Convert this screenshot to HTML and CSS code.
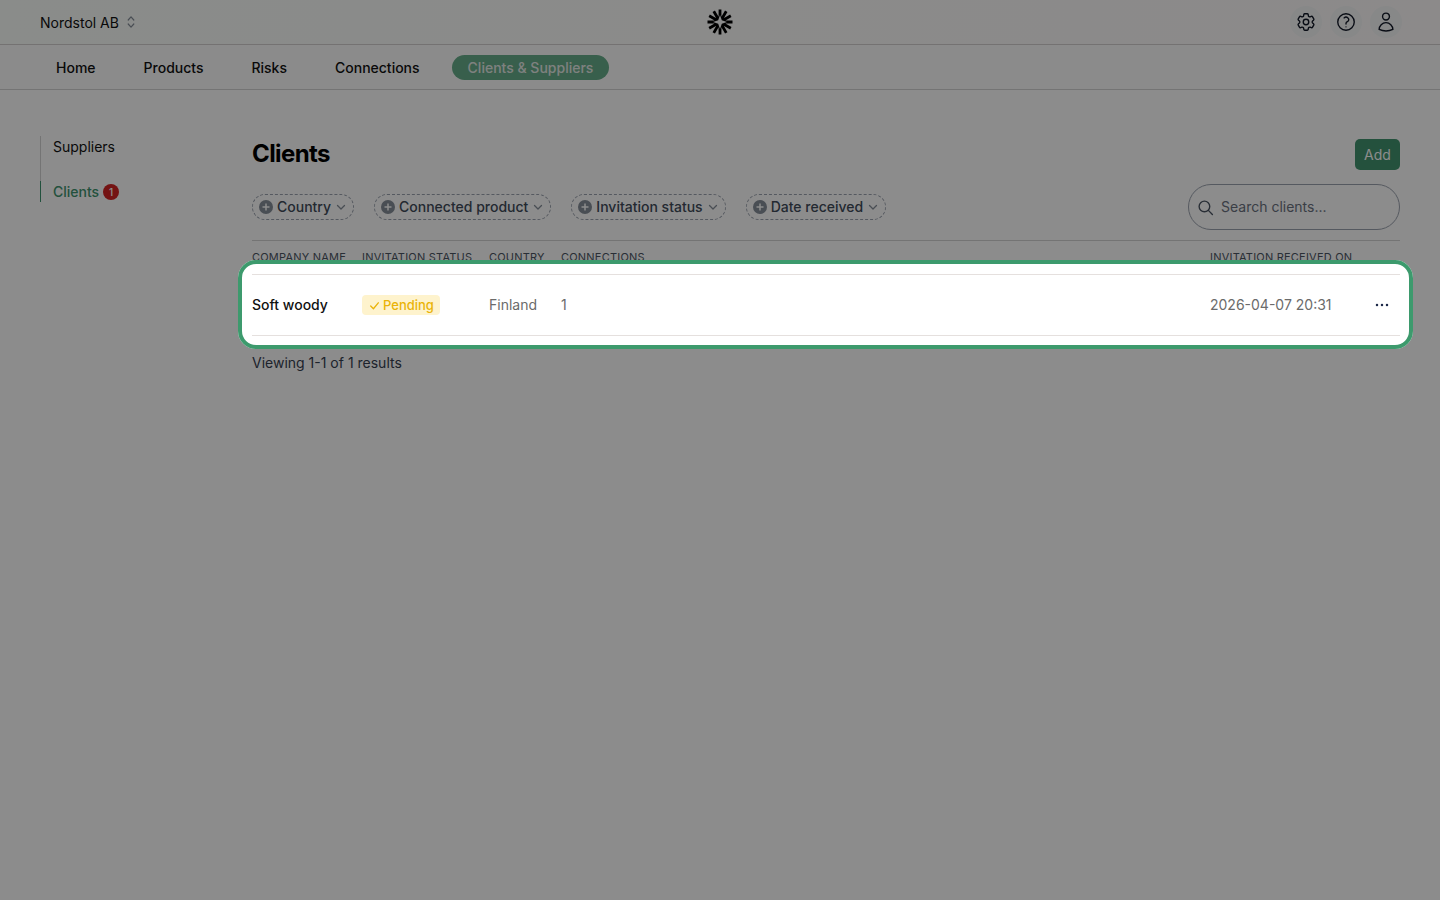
FILE: index.html
```html
<!DOCTYPE html>
<html lang="en">
<head>
<meta charset="utf-8">
<title>Clients</title>
<link rel="stylesheet" href="styles.css">
</head>
<body>
<header class="topbar">
  <div class="org"><span>Nordstol AB</span>
    <svg class="org-icon" viewBox="0 0 20 20" fill="none" stroke="currentColor" stroke-width="1.5" stroke-linecap="round" stroke-linejoin="round"><path d="M6.5 7.500 10 3.500l3.500 4M6.500 12.500l3.500 4 3.500-4"/></svg>
  </div>
  <svg class="logo" viewBox="0 0 26 26"><path class="logo-rays" d="M13 13 13 .5M13 13 19.250 2.180M13 13 23.830 6.750M13 13H25.500M13 13 23.830 19.250M13 13 19.250 23.830M13 13V25.500M13 13 6.750 23.830M13 13 2.180 19.250M13 13H.5M13 13 2.180 6.750M13 13 6.750 2.180"/><path class="logo-hole" d="M13 6 14.800 11.200 20 13 14.800 14.800 13 20 11.200 14.800 6 13 11.200 11.200Z"/></svg>
  <div class="top-actions">
    <span class="icon-btn"><svg viewBox="0 0 24 24" fill="none" stroke="currentColor" stroke-width="1.500" stroke-linecap="round" stroke-linejoin="round"><path d="M9.594 3.940c.09-.542.56-.94 1.110-.94h2.593c.55 0 1.020.398 1.110.94l.213 1.281c.063.374.313.686.645.870.074.04.147.083.22.127.325.196.72.257 1.075.124l1.217-.456a1.125 1.125 0 0 1 1.370.49l1.296 2.247a1.125 1.125 0 0 1-.26 1.431l-1.003.827c-.293.241-.438.613-.43.992a7.723 7.723 0 0 1 0 .255c-.008.378.137.75.43.991l1.004.827c.424.35.534.955.26 1.430l-1.298 2.247a1.125 1.125 0 0 1-1.369.491l-1.217-.456c-.355-.133-.75-.072-1.076.124a6.470 6.470 0 0 1-.22.128c-.331.183-.581.495-.644.869l-.213 1.281c-.09.543-.56.94-1.110.94h-2.594c-.55 0-1.019-.398-1.110-.94l-.213-1.281c-.062-.374-.312-.686-.644-.87a6.520 6.520 0 0 1-.22-.127c-.325-.196-.72-.257-1.076-.124l-1.217.456a1.125 1.125 0 0 1-1.369-.49l-1.297-2.247a1.125 1.125 0 0 1 .26-1.431l1.004-.827c.292-.24.437-.613.43-.991a6.932 6.932 0 0 1 0-.255c.007-.38-.138-.751-.43-.992l-1.004-.827a1.125 1.125 0 0 1-.26-1.430l1.297-2.247a1.125 1.125 0 0 1 1.370-.491l1.216.456c.356.133.751.072 1.076-.124.072-.044.146-.086.22-.128.332-.183.582-.495.644-.869l.214-1.280Z"/><path d="M15 12a3 3 0 1 1-6 0 3 3 0 0 1 6 0Z"/></svg></span>
    <span class="icon-btn"><svg viewBox="0 0 24 24" fill="none" stroke="currentColor" stroke-width="1.500" stroke-linecap="round" stroke-linejoin="round"><path d="M9.879 7.519c1.171-1.025 3.071-1.025 4.242 0 1.172 1.025 1.172 2.687 0 3.712-.203.179-.43.326-.67.442-.745.361-1.450.999-1.450 1.827v.75M21 12a9 9 0 1 1-18 0 9 9 0 0 1 18 0Zm-9 5.250h.008v.008H12v-.008Z"/></svg></span>
    <span class="icon-btn"><svg viewBox="0 0 24 24" fill="none" stroke="currentColor" stroke-width="1.500" stroke-linecap="round" stroke-linejoin="round"><path d="M15.750 6a3.750 3.750 0 1 1-7.500 0 3.750 3.750 0 0 1 7.500 0ZM4.501 20.118a7.500 7.500 0 0 1 14.998 0A17.933 17.933 0 0 1 12 21.750c-2.676 0-5.216-.584-7.499-1.632Z"/></svg></span>
  </div>
</header>
<nav class="mainnav">
  <a class="nav-item">Home</a>
  <a class="nav-item">Products</a>
  <a class="nav-item">Risks</a>
  <a class="nav-item">Connections</a>
  <a class="nav-item active">Clients &amp; Suppliers</a>
</nav>
<div class="layout">
  <aside class="side">
    <a class="side-item">Suppliers</a>
    <a class="side-item current">Clients <span class="badge">1</span></a>
  </aside>
  <main class="content">
    <div class="title-row">
      <h1>Clients</h1>
      <button class="add">Add</button>
    </div>
    <div class="filter-row">
      <div class="filters">
        <span class="chip"><svg class="plus" viewBox="0 0 14 14"><circle cx="7" cy="7" r="7"/><path d="M7 3.500v7M3.500 7h7"/></svg>Country<svg class="chev" viewBox="0 0 12 12"><path d="M2.500 4.500 6 8l3.500-3.500"/></svg></span>
        <span class="chip"><svg class="plus" viewBox="0 0 14 14"><circle cx="7" cy="7" r="7"/><path d="M7 3.500v7M3.500 7h7"/></svg>Connected product<svg class="chev" viewBox="0 0 12 12"><path d="M2.500 4.500 6 8l3.500-3.500"/></svg></span>
        <span class="chip"><svg class="plus" viewBox="0 0 14 14"><circle cx="7" cy="7" r="7"/><path d="M7 3.500v7M3.500 7h7"/></svg>Invitation status<svg class="chev" viewBox="0 0 12 12"><path d="M2.500 4.500 6 8l3.500-3.500"/></svg></span>
        <span class="chip"><svg class="plus" viewBox="0 0 14 14"><circle cx="7" cy="7" r="7"/><path d="M7 3.500v7M3.500 7h7"/></svg>Date received<svg class="chev" viewBox="0 0 12 12"><path d="M2.500 4.500 6 8l3.500-3.500"/></svg></span>
      </div>
      <div class="search">
        <svg viewBox="0 0 16 16" fill="none" stroke="currentColor" stroke-width="1.300" stroke-linecap="round"><circle cx="7" cy="7" r="5"/><path d="m10.700 10.700 3.800 3.800"/></svg>
        <span>Search clients...</span>
      </div>
    </div>
    <table class="table">
      <thead>
        <tr>
          <th class="c1">Company name</th>
          <th class="c2">Invitation status</th>
          <th class="c3">Country</th>
          <th class="c4">Connections</th>
          <th class="c5">Invitation received on</th>
          <th class="c6"></th>
        </tr>
      </thead>
      <tbody>
        <tr>
          <td class="name">Soft woody</td>
          <td><span class="status"><svg viewBox="0 0 12 12"><path d="M2.500 6.500 5 9l4.500-5.500"/></svg>Pending</span></td>
          <td class="muted">Finland</td>
          <td class="muted">1</td>
          <td class="muted">2026-04-07 20:31</td>
          <td class="dots-cell"><svg class="dots" viewBox="0 0 14 4"><circle cx="2" cy="2" r="1.250"/><circle cx="7" cy="2" r="1.250"/><circle cx="12" cy="2" r="1.250"/></svg></td>
        </tr>
      </tbody>
    </table>
    <p class="results">Viewing 1-1 of 1 results</p>
  </main>
</div>
<div class="spotlight"></div>
</body>
</html>
```
FILE: styles.css
```css
* { box-sizing: border-box; }
html, body { height: 100%; }
body {
  margin: 0;
  background: #fff;
  color: #000;
  font-family: Inter, "Liberation Sans", sans-serif;
  font-size: 14px;
  line-height: 20px;
  overflow: hidden;
}
.topbar {
  position: relative;
  height: 45px;
  display: flex;
  align-items: center;
  justify-content: space-between;
  padding: 0 40px;
  border-bottom: 1px solid #d4d0d0;
  background: linear-gradient(90deg, #fbfffc, #fffbfc);
}
.org { display: flex; align-items: center; gap: 4px; color: #111; }
.org span { padding-top: 2px; }
.org-icon { width: 16px; height: 16px; color: #868e99; }
.logo { position: absolute; left: 707px; top: 9px; width: 26px; height: 26px; }
.logo-rays { stroke: #000; stroke-width: 2.800; fill: none; }
.logo-hole { fill: #fff; }
.top-actions { display: flex; gap: 8px; margin-right: -2px; }
.icon-btn {
  width: 32px;
  height: 32px;
  border-radius: 50%;
  background: #f6f7f7;
  color: #111827;
  display: flex;
  align-items: center;
  justify-content: center;
}
.icon-btn svg { width: 22px; height: 22px; }
.mainnav {
  height: 45px;
  display: flex;
  align-items: center;
  gap: 16px;
  padding: 0 40px;
  border-bottom: 1px solid #d4d4d4;
  background: #fdfdfd;
}
.nav-item { padding: 0 16px; height: 25px; line-height: 25px; border-radius: 13px; color: #111; font-weight: 450; }
.nav-item.active { background: #67ad8a; color: #e6ebe8; font-weight: 500; }
.layout { display: flex; padding: 46px 40px 0; }
.side { width: 212px; flex: none; display: flex; flex-direction: column; gap: 24px; }
.side-item {
  height: 21px;
  padding-left: 12px;
  border-left: 1px solid #d4d4d4;
  display: flex;
  align-items: center;
  gap: 4px;
  color: #111;
  position: relative;
}
.side-item::after { content: ""; position: absolute; left: -1px; top: 21px; height: 24px; width: 1px; background: #d4d4d4; }
.side-item.current { color: #3f9470; border-left-color: #3f9470; font-weight: 500; }
.side-item.current::after { display: none; }
.badge {
  width: 16px;
  height: 16px;
  border-radius: 50%;
  background: #d32323;
  color: #fff;
  font-size: 10px;
  line-height: 16px;
  text-align: center;
}
.content { flex: 1; min-width: 0; }
.title-row { display: flex; justify-content: space-between; align-items: center; height: 31px; margin-top: 3px; }
h1 { margin: 0 0 2px; font-size: 24px; line-height: 30px; font-weight: 700; letter-spacing: -0.6px; }
.add {
  width: 45px;
  height: 31px;
  border: 0;
  border-radius: 5px;
  background: #42946f;
  color: #fff;
  font: 14px/20px Inter, sans-serif;
  padding: 0;
}
.filter-row { display: flex; justify-content: space-between; align-items: center; margin-top: 14px; height: 46px; }
.filters { display: flex; gap: 20px; }
.chip {
  height: 26px;
  padding: 0 6px;
  display: flex;
  align-items: center;
  gap: 4px;
  border: 1px dashed #9ca3af;
  border-radius: 13px;
  color: #414b5a;
  font-weight: 500;
  white-space: nowrap;
}
.plus { width: 14px; height: 14px; flex: none; }
.plus circle { fill: #868e99; }
.plus path { stroke: #fff; stroke-width: 1.500; fill: none; }
.chev { width: 12px; height: 12px; flex: none; }
.chev path { fill: none; stroke: #868e99; stroke-width: 1.300; stroke-linecap: round; stroke-linejoin: round; }
.search {
  width: 212px;
  height: 46px;
  border: 1px solid #9ca3af;
  border-radius: 23px;
  display: flex;
  align-items: center;
  gap: 7px;
  padding-left: 8px;
  color: #6b7280;
}
.search svg { width: 17px; height: 17px; color: #4b5563; }
.table { width: 100%; border-collapse: collapse; table-layout: fixed; margin-top: 10px; border-top: 1px solid #d4d4d4; }
.table th {
  padding: 9px 0 0;
  height: 34px;
  font-size: 11px;
  line-height: 14px;
  font-weight: 400;
  letter-spacing: .21px;
  color: #4b5563;
  text-transform: uppercase;
  text-align: left;
  vertical-align: top;
  white-space: nowrap;
}
.c1 { width: 110px; }
.c2 { width: 127px; }
.c3 { width: 72px; }
.c4 { width: 649px; }
.c5 { width: 150px; }
.table td { height: 61px; padding: 0; border-top: 1px solid #e5e0de; border-bottom: 1px solid #e5e0de; vertical-align: middle; }
.name { font-weight: 500; color: #111; }
.muted { color: #6b6b6b; }
.status {
  display: flex;
  width: fit-content;
  align-items: center;
  gap: 2px;
  height: 20px;
  padding: 0 6px;
  border-radius: 4px;
  background: #fef3cd;
  color: #eab308;
  font-size: 13px;
  font-weight: 500;
}
.status svg { width: 13px; height: 13px; fill: none; stroke: #eab308; stroke-width: 1.200; stroke-linecap: round; stroke-linejoin: round; }
.dots-cell { padding-right: 11px !important; }
.dots { width: 14px; height: 4px; fill: #1e2a4a; display: block; margin-left: auto; }
.results { margin: 17px 0 0; color: #374151; }
.spotlight {
  position: absolute;
  left: 238px;
  top: 260px;
  width: 1175px;
  height: 89px;
  border: 4px solid #3d9a6d;
  border-radius: 18px;
  box-shadow: 0 0 0 3000px rgba(0, 0, 0, .45);
  pointer-events: none;
}
```
